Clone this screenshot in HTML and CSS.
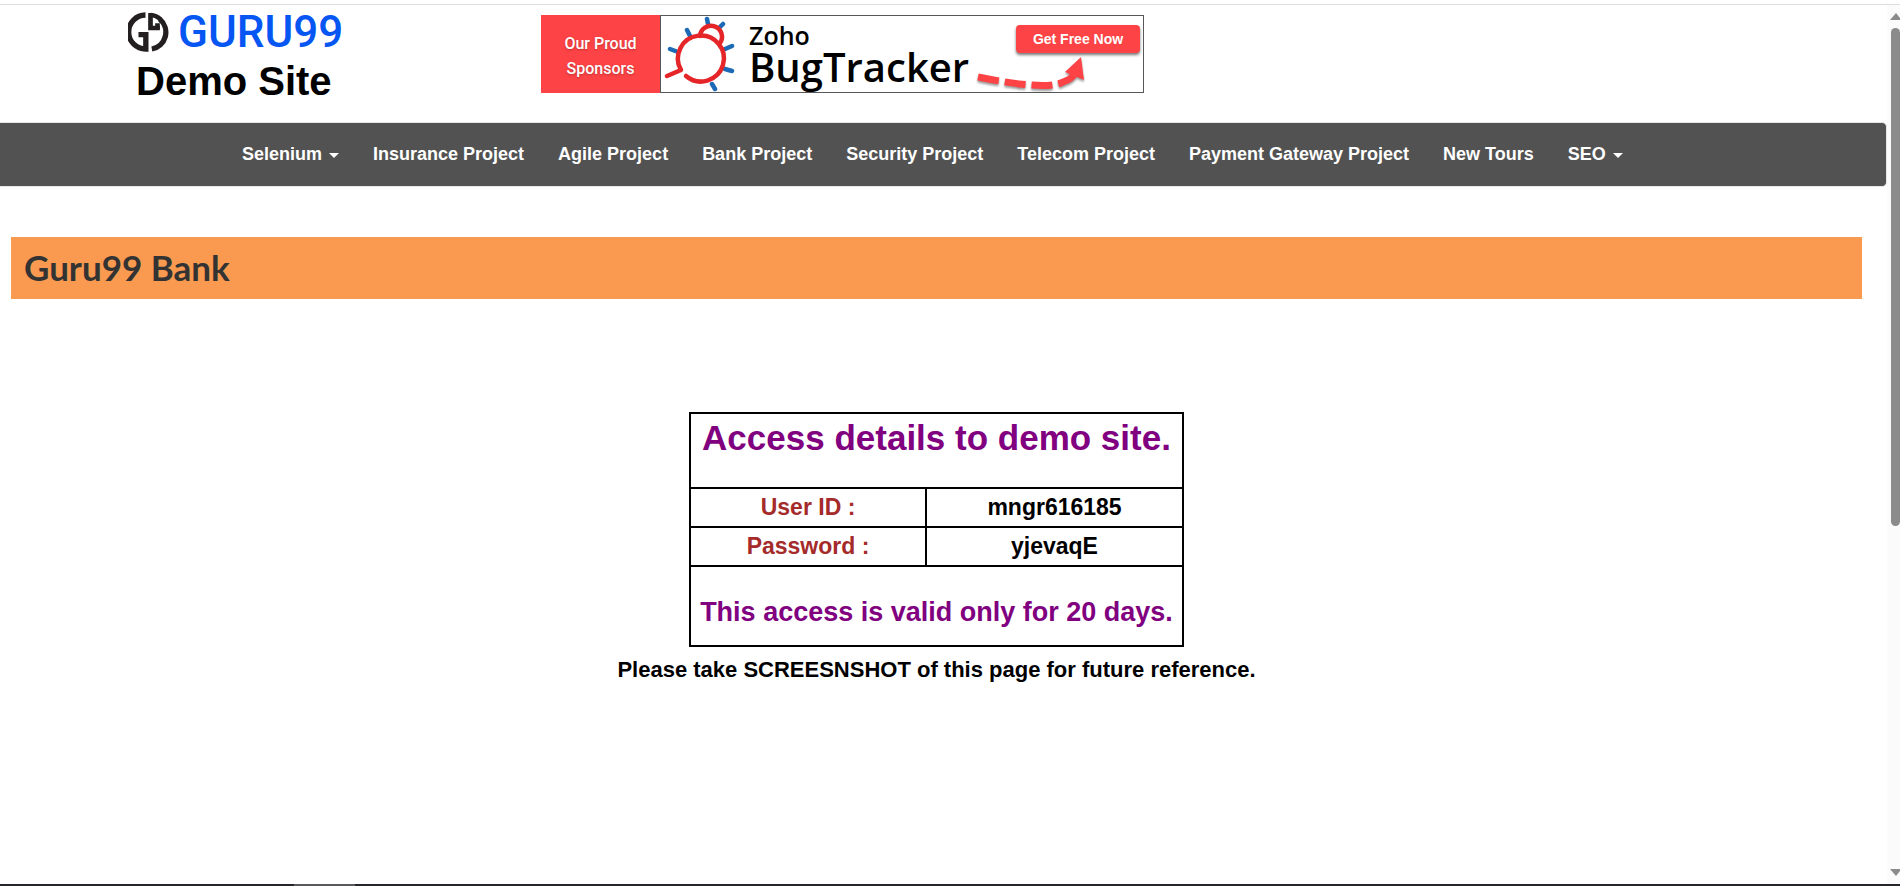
FILE: index.html
```html
<!DOCTYPE html>
<html lang="en">
<head>
<meta charset="utf-8">
<title>Guru99 Bank Demo Site</title>
<link rel="stylesheet" href="styles.css">
</head>
<body>
<div class="viewport">
  <div class="page">
    <header class="header">
      <div class="brand">
        <a class="logo" href="#">
          <svg class="logo-mark" viewBox="0 0 120 120" aria-hidden="true">
            <g fill="none" stroke="#231f20" stroke-width="16">
              <path d="M51 9A51 51 0 0 0 52 111V68H30"/>
              <path d="M70 111A51 51 0 0 0 94 22"/>
              <path d="M66 3V48H94" stroke-width="14"/>
              <path d="M66 9Q84 10 96 22M87 52V34" stroke-width="14"/>
            </g>
          </svg>
          <span class="logo-text">GURU99</span>
        </a>
        <h1 class="site-name">Demo Site</h1>
      </div>
      <a class="banner" href="#">
        <span class="sponsor"><span class="sponsor-line">Our Proud</span><span class="sponsor-line">Sponsors</span></span>
        <span class="ad">
          <svg class="bug" viewBox="0 0 74 76" aria-hidden="true">
            <g stroke="#1c6ab5" stroke-width="4.500" stroke-linecap="round">
              <path d="M47 8L46 3M59 11L62 8M29 20L26 14M17 36L9 33M64 33L71 30M64 53L71 55M51 68L54 73"/>
            </g>
            <g fill="none" stroke="#e52528" stroke-width="4.500" stroke-linecap="round" stroke-linejoin="round">
              <path d="M6 60L20 54A23 23 0 1 1 25 60"/>
              <path d="M39 20A11 11 0 1 1 59 27"/>
            </g>
          </svg>
          <span class="product"><span class="maker">Zoho</span><span class="product-name">BugTracker</span></span>
          <span class="offer">
            <span class="cta">Get Free Now</span>
            <svg class="arrow" viewBox="0 0 112 36" aria-hidden="true">
              <path d="M1 22Q70 36 86 27Q96 24 99 16" fill="none" stroke="#fd4345" stroke-width="7" stroke-dasharray="21 6"/>
              <path d="M104 2L107 25L88 17Z" fill="#fd4345"/>
            </svg>
          </span>
        </span>
      </a>
    </header>
    <nav class="nav">
      <a class="nav-link caret" href="#">Selenium</a>
      <a class="nav-link" href="#">Insurance Project</a>
      <a class="nav-link" href="#">Agile Project</a>
      <a class="nav-link" href="#">Bank Project</a>
      <a class="nav-link" href="#">Security Project</a>
      <a class="nav-link" href="#">Telecom Project</a>
      <a class="nav-link" href="#">Payment Gateway Project</a>
      <a class="nav-link" href="#">New Tours</a>
      <a class="nav-link caret" href="#">SEO</a>
    </nav>
    <h2 class="bank-title">Guru99 Bank</h2>
    <main class="main">
      <table class="access">
        <tr><td class="access-head" colspan="2"><h2 class="access-title">Access details to demo site.</h2></td></tr>
        <tr><th class="label" scope="row">User ID :</th><td class="value">mngr616185</td></tr>
        <tr><th class="label" scope="row">Password :</th><td class="value">yjevaqE</td></tr>
        <tr><td class="access-foot" colspan="2"><h3 class="access-note">This access is valid only for 20 days.</h3></td></tr>
      </table>
      <p class="reminder">Please take SCREESNSHOT of this page for future reference.</p>
    </main>
  </div>
  <div class="scrollbar" aria-hidden="true">
    <span class="scroll-up"></span>
    <span class="scroll-thumb"></span>
    <span class="scroll-rest"></span>
    <span class="scroll-down"></span>
  </div>
</div>
<footer class="taskbar"><span class="taskbar-item"></span></footer>
</body>
</html>
```
FILE: styles.css
```css
* { box-sizing: border-box; }

body {
  margin: 0;
  min-height: 100vh;
  display: flex;
  flex-direction: column;
  padding-top: 4px;
  background: #fff;
  color: #000;
  font-family: "Liberation Sans", Arial, sans-serif;
  overflow: hidden;
}

a { color: inherit; text-decoration: none; }
h1, h2, h3, p { margin: 0; }

.viewport {
  flex: 1;
  display: flex;
  border-top: 1px solid #ddd;
}

.page { flex: 1; }

.header {
  display: flex;
  gap: 200px;
  height: 117px;
  padding: 7px 0 0 128px;
}
.brand { width: 213px; }
.logo {
  display: flex;
  align-items: center;
  gap: 9px;
  height: 40px;
}
.logo-mark { width: 41px; height: 40px; flex: none; }
.logo-text {
  color: #0556f3;
  font: 500 44px/40px Roboto, sans-serif;
}
.site-name {
  padding-left: 8px;
  font-size: 40px;
  line-height: 58px;
  white-space: nowrap;
}

.banner {
  display: flex;
  width: 603px;
  height: 78px;
  margin-top: 3px;
}
.sponsor {
  width: 119px;
  padding-top: 16px;
  background: #fd4345;
  color: #fff;
  font: 500 16px/25px Roboto, sans-serif;
  text-align: center;
  text-shadow: 0 1px 2px #80202080;
}
.sponsor-line { display: block; }
.ad {
  flex: 1;
  display: flex;
  border: 1px solid #58585a;
}
.bug { width: 74px; height: 76px; }
.product {
  width: 238px;
  padding: 6px 0 0 14px;
  font-family: "Open Sans", sans-serif;
  font-weight: 600;
}
.maker, .product-name { display: block; }
.maker { font-size: 25px; line-height: 26px; }
.product-name { font-size: 40px; line-height: 38px; }
.offer {
  flex: 1;
  display: flex;
  flex-direction: column;
  align-items: flex-end;
  padding: 9px 3px 0 0;
}
.cta {
  width: 124px;
  border-radius: 4px;
  background: #fd4345;
  box-shadow: 0 2px 3px #0008;
  color: #fff;
  font-size: 14px;
  font-weight: 700;
  line-height: 28px;
  text-align: center;
}
.arrow {
  align-self: flex-start;
  width: 112px;
  height: 36px;
  margin: 2px 0 0 4px;
  filter: drop-shadow(0 2px 1px #0006);
}

.nav {
  display: flex;
  gap: 34px;
  height: 65px;
  padding-left: 242px;
  border: 1px solid #e7e7e7;
  border-left: 0;
  border-radius: 0 5px 5px 0;
  background: #525252;
}
.nav-link {
  color: #fff;
  font-size: 18px;
  font-weight: 700;
  line-height: 62px;
  white-space: nowrap;
}
.caret::after {
  content: "";
  display: inline-block;
  margin-left: 7px;
  border: 5px solid transparent;
  border-top-color: #fff;
  border-bottom: 0;
  vertical-align: middle;
}

.bank-title {
  margin: 50px 25px 0 11px;
  padding: 0 0 2px 13px;
  background: #f99a50;
  color: #333;
  font: 700 35px/60px Lato, sans-serif;
}

.main {
  display: flex;
  flex-direction: column;
  align-items: center;
  padding: 113px 14px 0 0;
}
.access {
  width: 495px;
  border-collapse: collapse;
  text-align: center;
}
.access td, .access th {
  padding: 0;
  border: 2px solid #000;
}
.access-title {
  padding-bottom: 25px;
  color: purple;
  font-size: 35px;
  line-height: 48px;
}
.label, .value {
  font-size: 23px;
  font-weight: 700;
  line-height: 37px;
}
.label { width: 236px; color: brown; }
.access-note {
  padding: 27px 0 15px;
  color: purple;
  font-size: 27px;
  line-height: 36px;
}
.reminder {
  padding-top: 4px;
  font-size: 22px;
  font-weight: 700;
  line-height: 38px;
}

.scrollbar {
  width: 13px;
  display: flex;
  flex-direction: column;
  align-items: flex-end;
  padding: 8px 0;
  background: #fbfbfb;
  overflow: hidden;
}
.scroll-up, .scroll-down {
  width: 10px;
  height: 7px;
  background: #8b8b8b;
}
.scroll-up { clip-path: polygon(60% 0, 100% 70%, 100% 100%, 0 100%); }
.scroll-down { clip-path: polygon(0 0, 100% 0, 100% 30%, 60% 100%); }
.scroll-thumb {
  flex: 498;
  width: 9px;
  margin-top: 8px;
  border-radius: 5px;
  background: #8b8b8b;
}
.scroll-rest { flex: 343; }

.taskbar {
  height: 2px;
  padding-left: 294px;
  background: #25262b;
}
.taskbar-item {
  display: block;
  width: 61px;
  height: 2px;
  background: #5a5a5e;
}
```
